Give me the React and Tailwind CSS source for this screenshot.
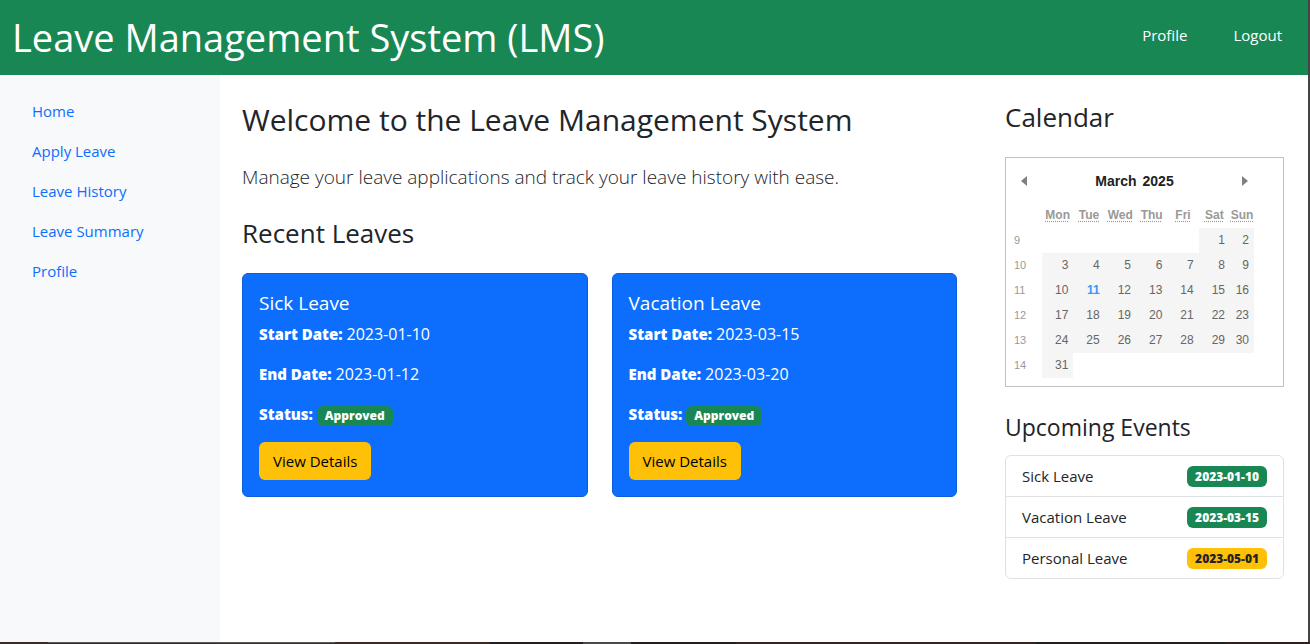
const navItems = ['Home', 'Apply Leave', 'Leave History', 'Leave Summary', 'Profile'];

const leaves = [
  { title: 'Sick Leave', start: '2023-01-10', end: '2023-01-12', status: 'Approved' },
  { title: 'Vacation Leave', start: '2023-03-15', end: '2023-03-20', status: 'Approved' },
];

const events = [
  { name: 'Sick Leave', date: '2023-01-10', tone: 'bg-[#198754] text-white' },
  { name: 'Vacation Leave', date: '2023-03-15', tone: 'bg-[#198754] text-white' },
  { name: 'Personal Leave', date: '2023-05-01', tone: 'bg-[#ffc107] text-[#212529]' },
];

const weekdays = [
  ['Mon', 'Monday'],
  ['Tue', 'Tuesday'],
  ['Wed', 'Wednesday'],
  ['Thu', 'Thursday'],
  ['Fri', 'Friday'],
  ['Sat', 'Saturday'],
  ['Sun', 'Sunday'],
];

const weeks = [
  [9, [null, null, null, null, null, 1, 2]],
  [10, [3, 4, 5, 6, 7, 8, 9]],
  [11, [10, 11, 12, 13, 14, 15, 16]],
  [12, [17, 18, 19, 20, 21, 22, 23]],
  [13, [24, 25, 26, 27, 28, 29, 30]],
  [14, [31, null, null, null, null, null, null]],
];

const TODAY = 11;

function Header() {
  return (
    <header className="flex h-[75px] items-center justify-between bg-[#198754] px-3 text-white">
      <h1 className="pb-[2px] text-[38px] leading-[48px]">Leave Management System (LMS)</h1>
      <nav className="flex gap-[46px] pr-[14px] pb-[6px] text-[15px] leading-6">
        <a href="#profile">Profile</a>
        <a href="#logout">Logout</a>
      </nav>
    </header>
  );
}

function Sidebar() {
  return (
    <nav className="w-[220px] shrink-0 bg-[#f8f9fa] px-4 py-4">
      <ul>
        {navItems.map((item) => (
          <li key={item}>
            <a href="#" className="block px-4 py-2 text-[15px] leading-6 text-[#0d6efd]">
              {item}
            </a>
          </li>
        ))}
      </ul>
    </nav>
  );
}

function Field({ label, children }) {
  return (
    <p className="mb-4">
      <strong className="font-extrabold">{label}</strong> {children}
    </p>
  );
}

function LeaveCard({ leave }) {
  return (
    <article className="flex-1 rounded-md border border-[#0b5ed7] bg-[#0d6efd] p-4 text-[15px] leading-6 text-white">
      <h4 className="mb-[6px] text-[19px] leading-[26px]">{leave.title}</h4>
      <Field label="Start Date:">
        <time className="text-[16px] leading-none">{leave.start}</time>
      </Field>
      <Field label="End Date:">
        <time className="text-[16px] leading-none">{leave.end}</time>
      </Field>
      <Field label="Status:">
        <span className="inline-block rounded-md bg-[#198754] px-2 py-1 text-[12px] leading-3 font-extrabold">
          {leave.status}
        </span>
      </Field>
      <button type="button" className="h-[38px] rounded-md bg-[#ffc107] px-[14px] text-black">
        View Details
      </button>
    </article>
  );
}

function Calendar() {
  return (
    <section
      aria-label="Month calendar"
      className="h-[230px] border border-[#c0c0c0] pr-[29px] font-['Liberation_Sans',Arial,sans-serif] text-[12px]"
    >
      <div className="flex h-[46px] items-center justify-between pr-[6px] pl-[15px]">
        <button type="button" aria-label="Previous month">
          <svg width="6" height="10" viewBox="0 0 6 10" className="block fill-[#808080]">
            <path d="M6 0v10L0 5z" />
          </svg>
        </button>
        <span className="flex gap-[6px] text-[14px] font-bold text-[#222]">
          <span>March</span>
          <span>2025</span>
        </span>
        <button type="button" aria-label="Next month">
          <svg width="6" height="10" viewBox="0 0 6 10" className="block fill-[#808080]">
            <path d="M0 0v10l6-5z" />
          </svg>
        </button>
      </div>
      <table className="w-full table-fixed border-collapse">
        <colgroup>
          <col className="w-9" />
          <col span={6} />
          <col className="w-6" />
        </colgroup>
        <thead>
          <tr className="h-6">
            <td />
            {weekdays.map(([short, full]) => (
              <th key={short} scope="col" className="p-0 pb-[2px] text-center font-bold text-[#999]">
                <abbr title={full} className="underline decoration-dotted underline-offset-2">
                  {short}
                </abbr>
              </th>
            ))}
          </tr>
        </thead>
        <tbody>
          {weeks.map(([week, days]) => (
            <tr key={week} className="h-[25px]">
              <th scope="row" className="p-0 pl-2 text-left text-[11px] font-normal text-[#999]">
                {week}
              </th>
              {days.map((day, i) =>
                day === null ? (
                  <td key={i} />
                ) : (
                  <td
                    key={i}
                    className={
                      day === TODAY
                        ? 'bg-[#f5f5f5] p-0 pr-[5px] pb-[2px] text-right font-bold text-[#3399ff]'
                        : 'bg-[#f5f5f5] p-0 pr-[5px] pb-[2px] text-right text-[#666]'
                    }
                  >
                    {day}
                  </td>
                ),
              )}
            </tr>
          ))}
        </tbody>
      </table>
    </section>
  );
}

function Events() {
  return (
    <ul className="divide-y divide-[#dee2e6] rounded-md border border-[#dee2e6] text-[15px] leading-6">
      {events.map((event) => (
        <li key={event.name} className="flex items-center justify-between px-4 py-2">
          {event.name}
          <span className={`rounded-md px-2 py-1 text-[12px] leading-[13px] font-extrabold ${event.tone}`}>
            {event.date}
          </span>
        </li>
      ))}
    </ul>
  );
}

function DesktopEdge() {
  return (
    <div className="flex h-[2px] bg-[#231f1f]">
      <div className="w-12 bg-[#3b2a25]" />
      <div className="w-[287px] border-t border-[#5c5858] bg-[#332c2b]" />
      <div className="w-[155px] bg-[#3b2a22]" />
      <div className="w-[93px]" />
      <div className="w-12 bg-[#4a4a4a]" />
      <div className="w-[105px]" />
      <div className="w-[300px] bg-[#352523]" />
      <div className="w-[190px]" />
      <div className="flex-1 bg-[#30201f]" />
    </div>
  );
}

export default function App() {
  return (
    <div className="flex min-h-screen flex-col bg-white font-['Open_Sans',sans-serif] text-[#212529]">
      <div className="flex flex-1 flex-col border-r-2 border-[#444]">
        <Header />
        <div className="flex flex-1">
          <Sidebar />
          <main className="min-w-0 flex-1 pt-6 pr-6 pl-[22px]">
            <h2 className="mb-5 text-[30px] leading-[42px]">Welcome to the Leave Management System</h2>
            <p className="mb-[22px] text-[19px] leading-[32px] font-light">
              Manage your leave applications and track your leave history with ease.
            </p>
            <h3 className="mb-[22px] text-[26px] leading-9">Recent Leaves</h3>
            <div className="flex gap-6">
              {leaves.map((leave) => (
                <LeaveCard key={leave.title} leave={leave} />
              ))}
            </div>
          </main>
          <aside className="w-1/4 px-6 pt-6">
            <h3 className="mb-[22px] text-[26px] leading-9">Calendar</h3>
            <Calendar />
            <h4 className="mt-6 mb-3 text-[23px] leading-8">Upcoming Events</h4>
            <Events />
          </aside>
        </div>
      </div>
      <DesktopEdge />
    </div>
  );
}
